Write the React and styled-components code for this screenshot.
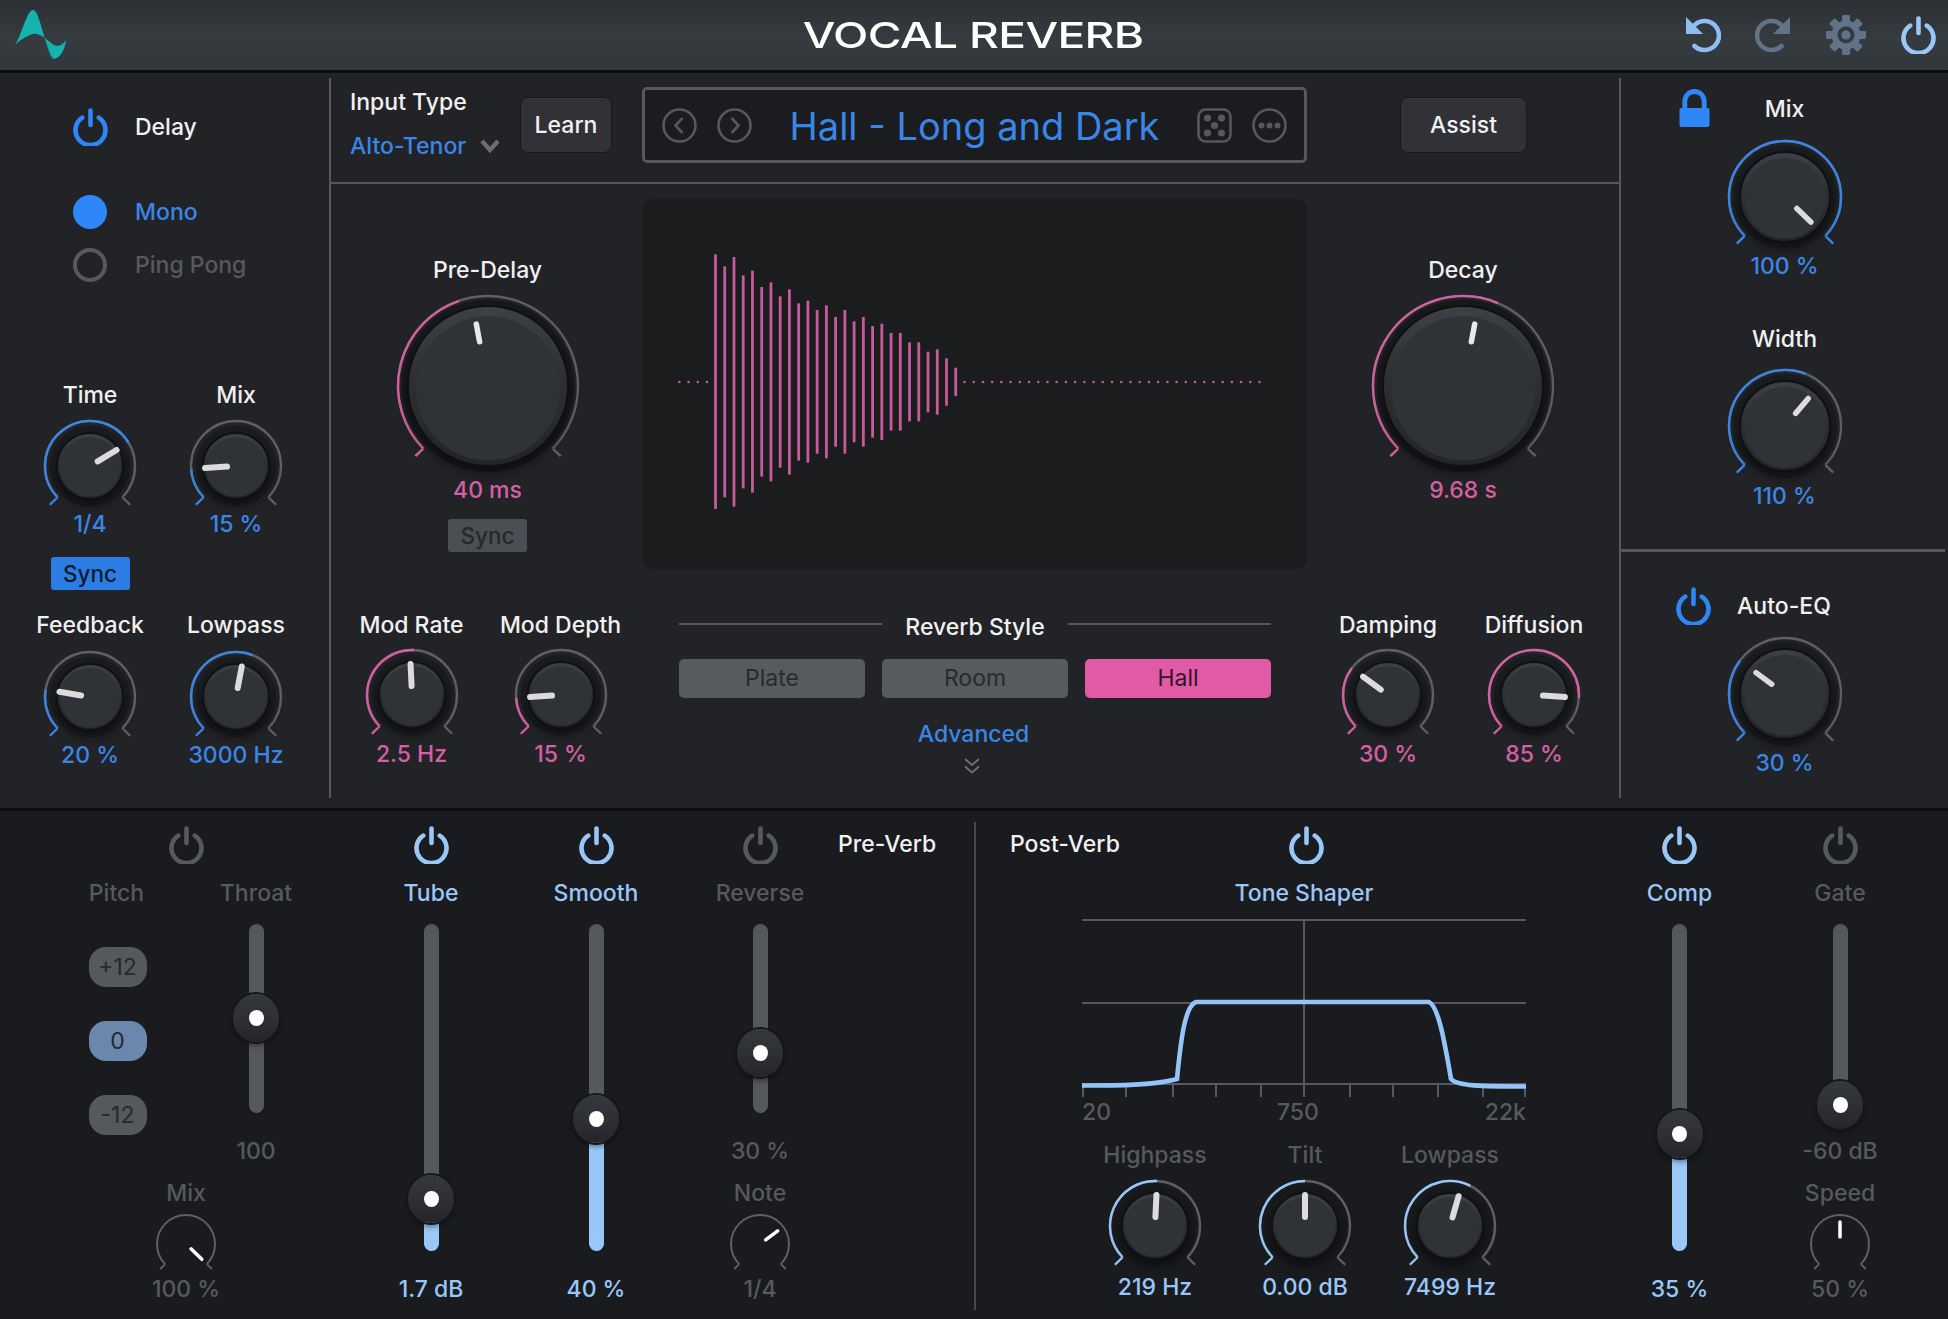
import React from "react";
import styled, { createGlobalStyle } from "styled-components";

const C = {
  white: "#f1f1f1",
  blue: "#3a86e6",
  pink: "#d55fa3",
  sky: "#99c7f8",
  dim: "#56595d",
  line: "#55585c",
};

const Global = createGlobalStyle`
  html, body { margin: 0; padding: 0; background: #191b1e; }
  body { font-family: "Inter", "Liberation Sans", sans-serif; -webkit-font-smoothing: antialiased; }
  * { box-sizing: border-box; }
`;

const Page = styled.div`
  width: 1948px;
  height: 1319px;
  display: flex;
  flex-direction: column;
  overflow: hidden;
`;

/* ---------- header ---------- */
const Header = styled.header`
  height: 73px;
  flex: none;
  border-bottom: 3px solid #0c0d0f;
  background: linear-gradient(180deg, #2c3034 0%, #363b40 55%, #32373b 100%);
  display: grid;
  grid-template-columns: 1fr auto 1fr;
  align-items: center;
  padding: 0 12px 0 15px;
`;
const Title = styled.h1`
  margin: 0 4px 1px 0;
  font-size: 36px;
  line-height: 40px;
  font-weight: 500;
  color: #fff;
  letter-spacing: -0.5px;
  white-space: nowrap;
  transform: scaleX(1.28);
`;
const HeaderIcons = styled.div`
  justify-self: end;
  display: flex;
  align-items: center;
  gap: 35px;
`;
const UndoGroup = styled.div`
  display: flex;
  align-items: center;
  gap: 34px;
`;

/* ---------- shared text ---------- */
const Caption = styled.div`
  font-size: ${(p) => p.$size || 23}px;
  line-height: 28px;
  height: 28px;
  font-weight: 500;
  white-space: nowrap;
  text-align: center;
  color: ${(p) => C[p.$tone || "white"]};
`;

/* ---------- top area ---------- */
const Main = styled.main`
  height: 738px;
  flex: none;
  border-bottom: 3px solid #0c0d0f;
  background: #222326;
  display: grid;
  grid-template-columns: 329px 1288px 1fr;
`;
const LeftPanel = styled.section`
  display: flex;
  flex-direction: column;
  border-right: 2px solid ${C.line};
  width: 331px;
  margin: 5px 0 10px;
  padding-top: 30px;
`;
const CenterPanel = styled.section`
  margin-left: 2px;
  width: 1288px;
  display: flex;
  flex-direction: column;
`;
const RightPanel = styled.section`
  margin: 5px 0 10px 2px;
  border-left: 2px solid ${C.line};
  display: flex;
  flex-direction: column;
`;
const ToggleRow = styled.div`
  display: flex;
  align-items: center;
  gap: ${(p) => p.$gap || 27}px;
  padding-left: ${(p) => p.$left || 73}px;
  height: 37px;
`;
const RadioGroup = styled.div`
  margin-top: 49px;
  padding-left: 73px;
  display: flex;
  flex-direction: column;
  gap: 17px;
`;
const RadioRow = styled.div`
  display: flex;
  align-items: center;
  gap: 28px;
  height: 36px;
`;
const RadioDot = styled.span`
  width: 34px;
  height: 34px;
  border-radius: 50%;
  flex: none;
  background: ${(p) => (p.$on ? "#2e86f8" : "transparent")};
  border: ${(p) => (p.$on ? "none" : `4px solid ${C.dim}`)};
`;
const KnobGrid = styled.div`
  display: grid;
  grid-template-columns: repeat(${(p) => p.$cols || 2}, ${(p) => p.$col || 146}px);
  padding-left: ${(p) => p.$left || 0}px;
  padding-top: ${(p) => p.$top || 0}px;
`;
const DelayGrid = styled(KnobGrid)`
  margin-top: 98px;
`;
const Badge = styled.div`
  width: 79px;
  height: 33px;
  justify-self: center;
  border-radius: 3px;
  font-size: 22.5px;
  line-height: 33px;
  font-weight: 500;
  text-align: center;
  background: ${(p) => (p.$on ? "#2b7de3" : "#4b4e52")};
  color: ${(p) => (p.$on ? "#0e1a2c" : "#26282b")};
`;
const SyncSlot = styled.div`
  grid-column: 1 / span 2;
  width: 146px;
  display: flex;
  justify-content: center;
  padding: 19px 0 21px;
`;
const Cell = styled.div`
  display: flex;
  flex-direction: column;
  align-items: center;
`;
const KnobSvg = styled.svg`
  display: block;
  flex: none;
  overflow: visible;
  margin-top: ${(p) => p.$above}px;
  margin-bottom: ${(p) => p.$below}px;
`;
const KnobBody = styled.g`
  filter: drop-shadow(0 6px 6px rgba(0, 0, 0, 0.45));
`;

const PresetBar = styled.div`
  height: 111px;
  flex: none;
  border-bottom: 2px solid ${C.line};
  padding: 14px 0 0 19px;
  display: flex;
  align-items: flex-start;
`;
const InputType = styled.div`
  width: 170px;
  flex: none;
  margin-top: 1px;
  display: flex;
  flex-direction: column;
  gap: 16px;
`;
const InputLabel = styled(Caption)`
  text-align: left;
`;
const InputValue = styled(InputLabel)`
  display: flex;
  align-items: center;
  gap: 14px;
`;
const FlatButton = styled.div`
  flex: none;
  width: ${(p) => p.$w}px;
  height: 56px;
  margin: 10px ${(p) => p.$after || 0}px 0 0;
  border-radius: 8px;
  background: #303237;
  border: 1.5px solid #17181a;
  box-shadow: 0 1px 0 rgba(255, 255, 255, 0.03) inset;
  color: ${C.white};
  font-size: 23px;
  font-weight: 500;
  display: flex;
  align-items: center;
  justify-content: center;
`;
const PresetBox = styled.div`
  flex: none;
  width: 665px;
  height: 76px;
  margin-right: 93px;
  border: 3px solid ${C.line};
  border-radius: 5px;
  background: #1b1c1f;
  display: flex;
  align-items: center;
  padding: 0 17px;
`;
const PresetNav = styled.div`
  display: flex;
  gap: 20px;
  flex: none;
`;
const PresetName = styled.div`
  flex: 1;
  margin-top: 1px;
  text-align: center;
  font-size: 38px;
  line-height: 46px;
  color: #3a86e6;
  white-space: nowrap;
`;
const Body = styled.div`
  flex: 1;
  display: grid;
  grid-template-columns: 311px 665px 312px;
  grid-template-rows: 416px 1fr;
`;
const BigColumn = styled.div`
  padding: 72px 0 0 ${(p) => p.$left || 0}px;
  display: flex;
  flex-direction: column;
  align-items: center;
`;
const BigSync = styled.div`
  margin-top: 15px;
`;
const Display = styled.div`
  height: 370px;
  margin-top: 15px;
  border-radius: 11px;
  background: #1b1c1e;
`;
const StyleColumn = styled.div`
  padding: 13px 36px 0 37px;
  display: flex;
  flex-direction: column;
  align-items: stretch;
`;
const StyleHead = styled.div`
  display: flex;
  align-items: center;
  gap: 23px;
`;
const Rule = styled.span`
  flex: 1;
  height: 2.5px;
  margin-bottom: 6px;
  background: ${C.line};
`;
const StyleButtons = styled.div`
  margin-top: 18px;
  display: grid;
  grid-template-columns: repeat(3, 1fr);
  gap: 17px;
`;
const StyleButton = styled.div`
  height: 39px;
  border-radius: 5px;
  font-size: 23px;
  font-weight: 400;
  line-height: 39px;
  text-align: center;
  background: ${(p) => (p.$on ? "#e05aa6" : "#575b5f")};
  color: ${(p) => (p.$on ? "#35132a" : "#282a2e")};
`;
const Advanced = styled.div`
  margin: 22px 3px 0 0;
  display: flex;
  flex-direction: column;
  align-items: center;
  gap: 9px;
`;
const ChevronSpot = styled.div`
  display: flex;
  margin-right: 3px;
`;
const Lockup = styled.div`
  display: grid;
  margin-top: 10px;
`;
const LockSpot = styled.div`
  grid-area: 1 / 1;
  margin-left: 58px;
  align-self: start;
  justify-self: start;
`;
const RightCell = styled(Cell)`
  grid-area: 1 / 1;
  justify-self: center;
  width: 100%;
  padding-top: 7px;
`;
const WidthCell = styled(Cell)`
  margin-top: 45px;
`;
const Separator = styled.div`
  height: 2.5px;
  margin: 39px 3px 0 0;
  background: ${C.line};
`;
const EqRow = styled(ToggleRow)`
  margin-top: 36px;
`;
const EqCell = styled(Cell)`
  margin-top: 11px;
`;

/* ---------- bottom ---------- */
const Bottom = styled.section`
  flex: 1;
  background: #191b1e;
  display: flex;
`;
const PitchGroup = styled.div`
  width: 280px;
  margin: 0 23px 0 46px;
  padding-top: 15px;
  display: flex;
  flex-direction: column;
  align-items: center;
  flex: none;
`;
const PitchColumns = styled.div`
  margin-top: 15px;
  width: 100%;
  display: grid;
  grid-template-columns: 141px 138px;
`;
const PitchCol = styled.div`
  display: flex;
  flex-direction: column;
  align-items: center;
`;
const PitchButtons = styled.div`
  margin: 40px 0 0 2px;
  display: flex;
  flex-direction: column;
  gap: 34px;
`;
const PitchButton = styled.div`
  width: 58px;
  height: 40px;
  border-radius: 17px;
  font-size: 23px;
  line-height: 40px;
  text-align: center;
  background: ${(p) => (p.$on ? "#6a87ad" : "#55585c")};
  color: #26282b;
`;
const Strip = styled.div`
  flex: none;
  width: ${(p) => p.$w || 164}px;
  padding-top: 15px;
  display: flex;
  flex-direction: column;
  align-items: center;
`;
const StripLabel = styled(Caption)`
  margin: 15px 0 17px;
`;
const BareLabel = styled(Caption)`
  margin-bottom: 17px;
`;
const ValueLabel = styled(Caption)`
  margin-top: 24px;
`;
const SubLabel = styled(Caption)`
  margin-top: 14px;
`;
const Track = styled.div`
  position: relative;
  width: 15px;
  height: ${(p) => p.$h}px;
  flex: none;
  border-radius: 7.5px;
  background: ${C.line};
  overflow: visible;
`;
const TrackFill = styled.div`
  position: absolute;
  left: 0;
  right: 0;
  bottom: 0;
  border-radius: 0 0 7.5px 7.5px;
  background: #99c7f8;
`;
const Handle = styled.div`
  position: absolute;
  left: 50%;
  width: 46px;
  height: 48px;
  margin: -24px 0 0 -23px;
  border-radius: 50%;
  background: linear-gradient(180deg, #35383c, #2a2c30 70%, #232528);
  box-shadow: 0 0 0 2px #15161a, 0 4px 5px rgba(0, 0, 0, 0.4);
  display: flex;
  align-items: center;
  justify-content: center;
`;
const HandleDot = styled.span`
  width: 15px;
  height: 16px;
  border-radius: 50%;
  background: #fff;
`;
const SectionTag = styled(Caption)`
  padding-top: 19px;
  text-align: ${(p) => p.$align || "left"};
  height: auto;
`;
const PreTag = styled(SectionTag)`
  margin-left: -3px;
  width: 134px;
`;
const VDivider = styled.div`
  flex: none;
  width: 2px;
  margin: 11px 0 9px 2px;
  background: #45484c;
`;
const PostTag = styled(SectionTag)`
  width: 106px;
  padding-left: 34px;
  flex: none;
`;
const ToneCol = styled.div`
  width: 444px;
  flex: none;
  margin-right: 73px;
  padding-top: 15px;
  display: flex;
  flex-direction: column;
  align-items: stretch;
`;
const Centered = styled.div`
  display: flex;
  justify-content: center;
  padding-left: 4px;
`;
const ToneLabel = styled(Caption)`
  margin: 15px 0 11px;
`;
const Graph = styled.svg`
  display: block;
  flex: none;
`;
const AxisLabels = styled.div`
  display: flex;
  justify-content: space-between;
  height: 28px;
`;
const ToneKnobs = styled.div`
  display: grid;
  grid-template-columns: 146px 154px 136px;
  margin-top: 15px;
`;

/* ---------- drawings ---------- */
const polar = (R, deg) => {
  const a = (deg * Math.PI) / 180;
  return [R * Math.sin(a), -R * Math.cos(a)];
};
const arc = (R, a, b) => {
  const [x0, y0] = polar(R, a);
  const [x1, y1] = polar(R, b);
  return `M${x0.toFixed(2)} ${y0.toFixed(2)}A${R} ${R} 0 ${b - a > 180 ? 1 : 0} 1 ${x1.toFixed(2)} ${y1.toFixed(2)}`;
};
const hook = (R, a) => {
  const [x0, y0] = polar(R, a);
  const [x1, y1] = polar(R + Math.min(11, R * 0.24), a);
  return `M${x0.toFixed(2)} ${y0.toFixed(2)}L${x1.toFixed(2)} ${y1.toFixed(2)}`;
};
const POINTERS = {
  29: [7, 22, 3.5, "#fff"],
  45: [9, 31, 6, "#dcdcdc"],
  56: [16.5, 36, 5.5, "#dcdcdc"],
  90: [45, 63, 5.5, "#e8e8e8"],
};
const START = -134;
const SWEEP = 268;

function Knob({ R = 45, r = 33, frac, arcFrac, tone, above = 10, below = 3, bare }) {
  const accent = tone ? C[tone] : "#5d6064";
  const end = START + SWEEP * (arcFrac ?? frac);
  const ang = START + SWEEP * frac;
  const [pi, po, pw, pc] = POINTERS[R] || POINTERS[45];
  const h = R + 2 + Math.round(R * 0.92);
  const [ax, ay] = polar(pi, ang);
  const [bx, by] = polar(po, ang);
  const sw = bare ? 2 : 2.4;
  return (
    <KnobSvg
      width={2 * R + 4}
      height={h}
      viewBox={`${-R - 2} ${-R - 2} ${2 * R + 4} ${h}`}
      $above={above}
      $below={below}
    >
      <defs>
        <linearGradient id="knobRim" x1="0" y1="0" x2="0" y2="1">
          <stop offset="0" stopColor="#3d4044" />
          <stop offset="0.5" stopColor="#2c2e32" />
          <stop offset="1" stopColor="#222427" />
        </linearGradient>
      </defs>
      <path d={arc(R, START, -START)} fill="none" stroke="#5d6064" strokeWidth={sw} />
      <path d={hook(R, -START)} fill="none" stroke={(arcFrac ?? frac) >= 1 ? accent : "#5d6064"} strokeWidth={sw} />
      {tone && <path d={arc(R, START, end)} fill="none" stroke={accent} strokeWidth={sw} />}
      <path d={hook(R, START)} fill="none" stroke={accent} strokeWidth={sw} />
      {!bare && (
        <>
          <circle r={r + (R - r) * 0.62} fill={R > 60 ? "#18191b" : "rgba(22,23,25,.55)"} />
          <KnobBody>
            <circle r={r} fill="url(#knobRim)" stroke="#0f1012" strokeWidth="1.8" />
          </KnobBody>
          <circle r={r * 0.9} cy={r * 0.03} fill="#2f3236" />
        </>
      )}
      <line x1={ax} y1={ay} x2={bx} y2={by} stroke={pc} strokeWidth={pw} strokeLinecap="round" />
    </KnobSvg>
  );
}

function KnobCell({ label, value, tone, labelTone, ...rest }) {
  return (
    <Cell>
      <Caption $tone={labelTone}>{label}</Caption>
      <Knob tone={tone} {...rest} />
      <Caption $tone={tone}>{value}</Caption>
    </Cell>
  );
}

function PowerIcon({ color, w = 35, h = 38 }) {
  return (
    <svg width={w} height={h} viewBox="0 0 35 38" fill="none" stroke={color} strokeWidth="4.6" strokeLinecap="round">
      <path d="M9.2 9.6A15 15 0 1 0 25.8 9.6" />
      <path d="M17.5 2.5V17" />
    </svg>
  );
}
function Logo() {
  return (
    <svg width="52" height="52" viewBox="0 0 52 52">
      <path
        fill="#14b3ae"
        d="M0 36C6 27 12 1 18 1C23 1 26 18 31 33C34 44 37 51 39 50C45 49 50 41 51 31C47 37 42 39 36 34C29 28 22 22 15 26C10 28 5 31 0 36Z"
      />
      <path fill="none" stroke="#1b6f70" strokeWidth="1" d="M30 30C33 41 36 49 39 50" />
    </svg>
  );
}
function Undo({ flip, color }) {
  return (
    <svg width="36" height="38" viewBox="0 0 36 38" fill="none" style={flip ? { transform: "scaleX(-1)" } : undefined}>
      <path d="M9 9.5A14.5 14.5 0 1 1 9.5 30" stroke={color} strokeWidth="4.6" strokeLinecap="round" />
      <path d="M1 1V18H18Z" fill={color} />
    </svg>
  );
}
function Gear({ color }) {
  const teeth = [0, 45, 90, 135, 180, 225, 270, 315];
  return (
    <svg width="40" height="40" viewBox="-20 -20 40 40">
      {teeth.map((d) => (
        <rect key={d} x="-4" y="-20" width="8" height="9" rx="1.4" fill={color} transform={`rotate(${d})`} />
      ))}
      <circle r="11.5" fill="none" stroke={color} strokeWidth="6" />
      <circle r="4.6" fill={color} />
    </svg>
  );
}
function Lock() {
  return (
    <svg width="31" height="40" viewBox="0 0 32 40">
      <path d="M6 20V13A10 10 0 0 1 26 13V20" fill="none" stroke="#2e86f8" strokeWidth="5" />
      <rect x="0.5" y="20" width="31" height="19.5" rx="2" fill="#2e86f8" />
    </svg>
  );
}
function Chevron() {
  return (
    <svg width="20" height="16" viewBox="0 0 20 16" fill="none" stroke="#6b6e72" strokeWidth="4.2" strokeLinejoin="miter">
      <path d="M2 3L10 12L18 3" />
    </svg>
  );
}
function DoubleChevron() {
  return (
    <svg width="18" height="18" viewBox="0 0 18 18" fill="none" stroke="#6b6e72" strokeWidth="2">
      <path d="M2 2L9 8L16 2" />
      <path d="M2 9.5L9 15.5L16 9.5" />
    </svg>
  );
}
function CircleNav({ dir }) {
  return (
    <svg width="35" height="35" viewBox="0 0 35 35" fill="none" stroke={C.line} strokeWidth="2.6">
      <circle cx="17.5" cy="17.5" r="16" />
      <path d={dir === "l" ? "M20.5 10L13.5 17.5L20.5 25" : "M14.5 10L21.5 17.5L14.5 25"} />
    </svg>
  );
}
function Dice() {
  const pts = [[10, 10], [24, 10], [17, 17.5], [10, 25], [24, 25]];
  return (
    <svg width="35" height="35" viewBox="0 0 35 35" fill="none">
      <rect x="1.5" y="1.5" width="32" height="32" rx="7" stroke={C.line} strokeWidth="2.6" />
      {pts.map(([x, y]) => (
        <circle key={`${x}${y}`} cx={x + 0.5} cy={y} r="3.6" fill={C.line} />
      ))}
    </svg>
  );
}
function More() {
  return (
    <svg width="35" height="35" viewBox="0 0 35 35" fill="none">
      <circle cx="17.5" cy="17.5" r="16" stroke={C.line} strokeWidth="2.6" />
      {[9.5, 17.5, 25.5].map((x) => (
        <circle key={x} cx={x} cy="17.5" r="3" fill={C.line} />
      ))}
    </svg>
  );
}

const BARS = [
  [193, 957], [229, 922], [201, 950], [256, 895], [242, 908], [291, 860], [277, 874], [319, 833], [298, 854],
  [340, 812], [332, 818], [360, 791], [346, 805], [381, 770], [360, 791], [394, 757], [381, 770], [408, 743],
  [401, 750], [429, 722], [429, 722], [457, 694], [457, 694], [485, 667], [478, 674], [505, 647], [533, 618],
];
function Waveform() {
  const mid = 183;
  const leftDots = [0, 1, 2, 3].map((i) => 37.3 + i * 9.23);
  const rightDots = Array.from({ length: 33 }, (_, i) => 322.5 + i * 9.22);
  return (
    <svg width="665" height="370" viewBox="0 0 665 370">
      {[...leftDots, ...rightDots].map((x) => (
        <circle key={x} cx={x} cy={mid} r="1.3" fill="#c75a9c" />
      ))}
      {BARS.map(([t, b], i) => (
        <line
          key={i}
          x1={73.5 + i * 9.24}
          x2={73.5 + i * 9.24}
          y1={t / 3 - 9}
          y2={b / 3 - 9}
          stroke="#c75a9c"
          strokeWidth="2.8"
        />
      ))}
    </svg>
  );
}
function ToneGraph() {
  const ticks = [1, 44, 91, 134, 179, 222, 268, 311, 356, 401, 443];
  return (
    <Graph width="444" height="180" viewBox="0 0 444 180" fill="none">
      <g stroke="#57595c" strokeWidth="2">
        <path d="M0 2H444M0 85H444M0 166H444M222 2V179" />
        {ticks.map((x) => (
          <path key={x} d={`M${x} 166V179`} />
        ))}
      </g>
      <path
        d="M0 167.5C40 167.5 70 167 91 162L95 161C99 120 103 88 114 84L347 84C356 88 362 120 369 161C375 168 400 168.5 444 168.5"
        stroke="#93c5fb"
        strokeWidth="4.6"
      />
    </Graph>
  );
}

function Slider({ h, pos, fill }) {
  return (
    <Track $h={h}>
      {fill && <TrackFill style={{ top: pos }} />}
      <Handle style={{ top: pos }}>
        <HandleDot />
      </Handle>
    </Track>
  );
}

function TallStrip({ label, on, pos, value, w }) {
  const tone = on ? "sky" : "dim";
  return (
    <Strip $w={w}>
      <PowerIcon color={on ? C.sky : C.dim} />
      <StripLabel $tone={tone}>{label}</StripLabel>
      <Slider h={327} pos={pos} fill={on} />
      <ValueLabel $tone={tone}>{value}</ValueLabel>
    </Strip>
  );
}
function ShortStrip({ label, pos, value, sub, subValue, frac, w }) {
  return (
    <Strip $w={w}>
      <PowerIcon color={C.dim} />
      <StripLabel $tone="dim">{label}</StripLabel>
      <Slider h={189} pos={pos} />
      <ValueLabel $tone="dim">{value}</ValueLabel>
      <SubLabel $tone="dim">{sub}</SubLabel>
      <Knob R={29} bare frac={frac} above={6} below={4} />
      <Caption $tone="dim">{subValue}</Caption>
    </Strip>
  );
}

export default function App() {
  return (
    <Page>
      <Global />
      <Header>
        <Logo />
        <Title>VOCAL REVERB</Title>
        <HeaderIcons>
          <UndoGroup>
            <Undo color="#8fbdf2" />
            <Undo flip color="#617487" />
          </UndoGroup>
          <Gear color="#617487" />
          <PowerIcon color={C.sky} />
        </HeaderIcons>
      </Header>

      <Main>
        <LeftPanel>
          <ToggleRow>
            <PowerIcon color="#2e86f8" />
            <Caption>Delay</Caption>
          </ToggleRow>
          <RadioGroup>
            <RadioRow>
              <RadioDot $on />
              <Caption $tone="blue">Mono</Caption>
            </RadioRow>
            <RadioRow>
              <RadioDot />
              <Caption $tone="dim">Ping Pong</Caption>
            </RadioRow>
          </RadioGroup>
          <DelayGrid $left={17}>
            <KnobCell label="Time" value="1/4" tone="blue" frac={0.72} />
            <KnobCell label="Mix" value="15 %" tone="blue" frac={0.15} />
            <SyncSlot>
              <Badge $on>Sync</Badge>
            </SyncSlot>
            <KnobCell label="Feedback" value="20 %" tone="blue" frac={0.2} above={11} below={3} />
            <KnobCell label="Lowpass" value="3000 Hz" tone="blue" frac={0.54} arcFrac={0.58} above={11} below={3} />
          </DelayGrid>
        </LeftPanel>

        <CenterPanel>
          <PresetBar>
            <InputType>
              <InputLabel>Input Type</InputLabel>
              <InputValue $tone="blue">
                Alto-Tenor
                <Chevron />
              </InputValue>
            </InputType>
            <FlatButton $w={92} $after={30}>Learn</FlatButton>
            <PresetBox>
              <PresetNav>
                <CircleNav dir="l" />
                <CircleNav dir="r" />
              </PresetNav>
              <PresetName>Hall - Long and Dark</PresetName>
              <PresetNav>
                <Dice />
                <More />
              </PresetNav>
            </PresetBox>
            <FlatButton $w={127}>Assist</FlatButton>
          </PresetBar>
          <Body>
            <BigColumn $left={2}>
              <Caption>Pre-Delay</Caption>
              <Knob R={90} r={80} frac={0.46} arcFrac={0.43} tone="pink" above={10} below={7} />
              <Caption $tone="pink">40 ms</Caption>
              <BigSync>
                <Badge>Sync</Badge>
              </BigSync>
            </BigColumn>
            <Display>
              <Waveform />
            </Display>
            <BigColumn>
              <Caption>Decay</Caption>
              <Knob R={90} r={80} frac={0.54} arcFrac={0.585} tone="pink" above={10} below={7} />
              <Caption $tone="pink">9.68 s</Caption>
            </BigColumn>

            <KnobGrid $col={149} $left={6} $top={11}>
              <KnobCell label="Mod Rate" value="2.5 Hz" tone="pink" frac={0.49} arcFrac={0.51} above={9} below={4} />
              <KnobCell label="Mod Depth" value="15 %" tone="pink" frac={0.15} above={9} below={4} />
            </KnobGrid>
            <StyleColumn>
              <StyleHead>
                <Rule />
                <Caption>Reverb Style</Caption>
                <Rule />
              </StyleHead>
              <StyleButtons>
                <StyleButton>Plate</StyleButton>
                <StyleButton>Room</StyleButton>
                <StyleButton $on>Hall</StyleButton>
              </StyleButtons>
              <Advanced>
                <Caption $tone="blue">Advanced</Caption>
                <ChevronSpot>
                  <DoubleChevron />
                </ChevronSpot>
              </Advanced>
            </StyleColumn>
            <KnobGrid $col={146} $left={8} $top={11}>
              <KnobCell label="Damping" value="30 %" tone="pink" frac={0.3} above={9} below={4} />
              <KnobCell label="Diffusion" value="85 %" tone="pink" frac={0.85} above={9} below={4} />
            </KnobGrid>
          </Body>
        </CenterPanel>

        <RightPanel>
          <Lockup>
            <LockSpot>
              <Lock />
            </LockSpot>
            <RightCell>
              <Caption>Mix</Caption>
              <Knob R={56} r={45} frac={1} tone="blue" above={16} below={3} />
              <Caption $tone="blue">100 %</Caption>
            </RightCell>
          </Lockup>
          <WidthCell>
            <Caption>Width</Caption>
            <Knob R={56} r={45} frac={0.65} arcFrac={0.58} tone="blue" above={15} below={4} />
            <Caption $tone="blue">110 %</Caption>
          </WidthCell>
          <Separator />
          <EqRow $left={55} $gap={26}>
            <PowerIcon color="#2e86f8" />
            <Caption>Auto-EQ</Caption>
          </EqRow>
          <EqCell>
            <Knob R={56} r={45} frac={0.3} tone="blue" above={0} below={3} />
            <Caption $tone="blue">30 %</Caption>
          </EqCell>
        </RightPanel>
      </Main>

      <Bottom>
        <PitchGroup>
          <PowerIcon color={C.dim} />
          <PitchColumns>
            <PitchCol>
              <Caption $tone="dim">Pitch</Caption>
              <PitchButtons>
                <PitchButton>+12</PitchButton>
                <PitchButton $on>0</PitchButton>
                <PitchButton>-12</PitchButton>
              </PitchButtons>
            </PitchCol>
            <PitchCol>
              <BareLabel $tone="dim">Throat</BareLabel>
              <Slider h={189} pos={94} />
              <ValueLabel $tone="dim">100</ValueLabel>
            </PitchCol>
          </PitchColumns>
          <SubLabel $tone="dim">Mix</SubLabel>
          <Knob R={29} bare frac={1} above={6} below={4} />
          <Caption $tone="dim">100 %</Caption>
        </PitchGroup>
        <TallStrip label="Tube" on pos={275} value="1.7 dB" />
        <TallStrip label="Smooth" on pos={195} value="40 %" w={166} />
        <ShortStrip label="Reverse" pos={129} value="30 %" sub="Note" subValue="1/4" frac={0.7} w={162} />
        <PreTag>Pre-Verb</PreTag>
        <VDivider />
        <PostTag>Post-Verb</PostTag>
        <ToneCol>
          <Centered>
            <PowerIcon color={C.sky} />
          </Centered>
          <ToneLabel $tone="sky">Tone Shaper</ToneLabel>
          <ToneGraph />
          <AxisLabels>
            <Caption $tone="dim">20</Caption>
            <Caption $tone="dim">750</Caption>
            <Caption $tone="dim">22k</Caption>
          </AxisLabels>
          <ToneKnobs>
            <KnobCell label="Highpass" labelTone="dim" value="219 Hz" tone="sky" frac={0.51} above={10} below={6} />
            <KnobCell label="Tilt" labelTone="dim" value="0.00 dB" tone="sky" frac={0.5} above={10} below={6} />
            <KnobCell label="Lowpass" labelTone="dim" value="7499 Hz" tone="sky" frac={0.56} arcFrac={0.6} above={10} below={6} />
          </ToneKnobs>
        </ToneCol>
        <TallStrip label="Comp" on pos={210} value="35 %" w={161} />
        <ShortStrip label="Gate" pos={181} value="-60 dB" sub="Speed" subValue="50 %" frac={0.5} w={160} />
      </Bottom>
    </Page>
  );
}
